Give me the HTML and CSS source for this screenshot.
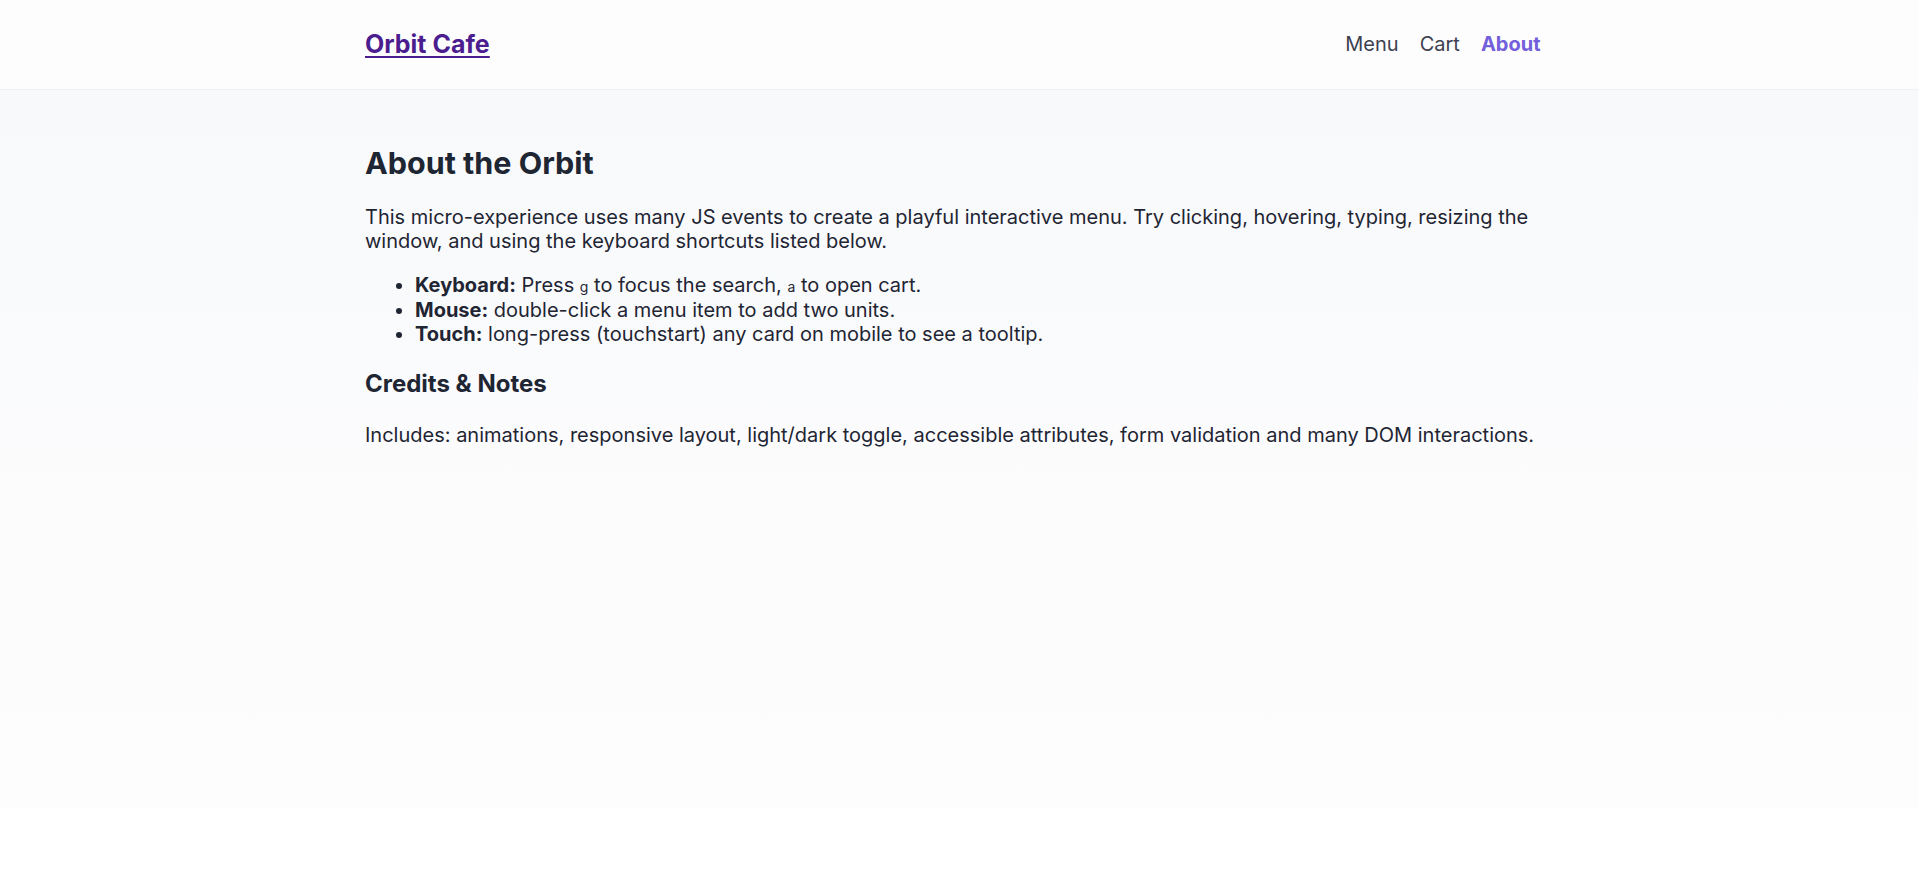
FILE: index.html
```html
<!DOCTYPE html>
<html lang="en">
<head>
<meta charset="utf-8">
<title>Orbit Cafe — About</title>
<link rel="stylesheet" href="styles.css">
</head>
<body>
<header class="site-header">
  <div class="container header-inner">
    <a class="logo" href="#">Orbit Cafe</a>
    <nav class="nav">
      <a class="nav-link" href="#">Menu</a>
      <a class="nav-link" href="#">Cart</a>
      <a class="nav-link active" href="#">About</a>
    </nav>
  </div>
</header>
<main class="main">
  <div class="container content">
    <h1 class="title">About the Orbit</h1>
    <p class="intro">This micro-experience uses many JS events to create a playful interactive menu. Try clicking, hovering, typing, resizing the window, and using the keyboard shortcuts listed below.</p>
    <ul class="tips">
      <li><strong>Keyboard:</strong> Press <kbd>g</kbd> to focus the search, <kbd>a</kbd> to open cart.</li>
      <li><strong>Mouse:</strong> double-click a menu item to add two units.</li>
      <li><strong>Touch:</strong> long-press (touchstart) any card on mobile to see a tooltip.</li>
    </ul>
    <h3 class="subtitle">Credits &amp; Notes</h3>
    <p class="notes">Includes: animations, responsive layout, light/dark toggle, accessible attributes, form validation and many DOM interactions.</p>
  </div>
</main>
<footer class="site-footer"></footer>
</body>
</html>
```
FILE: styles.css
```css
* { box-sizing: border-box; }
html, body { margin: 0; padding: 0; }
body {
  font-family: Inter, "Noto Sans", "Liberation Sans", sans-serif;
  color: #1f2533;
  background: #ffffff;
}
.container {
  max-width: 1188px;
  margin: 0 auto;
}
.site-header {
  background: #fdfdfe;
  border-bottom: 1px solid #eff0f4;
  height: 90px;
}
.header-inner {
  height: 88px;
  display: flex;
  align-items: center;
  justify-content: space-between;
}
.logo {
  font-size: 25px;
  line-height: 30px;
  font-weight: 700;
  color: #4c1d8f;
  text-decoration: underline;
  text-underline-offset: 3px;
  text-decoration-thickness: 2px;
}
.nav {
  display: flex;
  margin-right: 2px;
}
.nav-link {
  font-size: 20px;
  line-height: 30px;
  color: #3d4150;
  text-decoration: none;
  padding: 0 10.5px;
}
.nav-link.active {
  color: #735fdb;
  font-weight: 700;
}
.main {
  min-height: 718px;
  background: linear-gradient(180deg, #f8f9fb 0%, #f9fafc 30%, #fcfcfd 55%, #fdfdfd 100%);
}
.content {
  padding-top: 55px;
}
.title {
  margin: 0;
  font-size: 30.5px;
  line-height: 36px;
  font-weight: 700;
  color: #1e2533;
}
.intro {
  margin: 24px 0 0;
  font-size: 20px;
  line-height: 24px;
}
.tips {
  margin: 21px 0 0;
  padding-left: 50px;
  font-size: 20px;
  line-height: 23.9px;
}
.tips strong { font-weight: 700; }
.tips kbd {
  font-family: Inter, "Noto Sans", sans-serif;
  font-size: 14px;
}
.subtitle {
  margin: 22px 0 0;
  font-size: 24px;
  line-height: 29px;
  font-weight: 700;
  color: #1e2533;
}
.notes {
  margin: 25px 0 0;
  font-size: 20px;
  line-height: 24px;
}
.site-footer {
  height: 63px;
  background: #ffffff;
}
```
